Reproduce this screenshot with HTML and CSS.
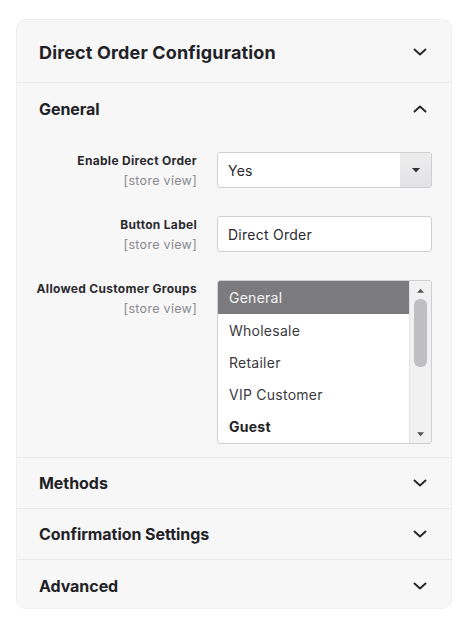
FILE: index.html
```html
<!DOCTYPE html>
<html>
<head>
<meta charset="utf-8">
<link rel="stylesheet" href="styles.css">
</head>
<body>
<div class="card">
  <div class="section top">
    <span class="title big">Direct Order Configuration</span>
    <svg class="chev" viewBox="0 0 14 8"><path d="M1.5 1.5 L7 6.5 L12.5 1.5"/></svg>
  </div>
  <div class="group">
    <div class="section open">
      <span class="title">General</span>
      <svg class="chev" viewBox="0 0 14 8"><path d="M1.5 6.5 L7 1.5 L12.5 6.5"/></svg>
    </div>
    <div class="fields">
      <div class="row">
        <div class="label"><div class="name">Enable Direct Order</div><div class="scope">[store view]</div></div>
        <div class="select">
          <span class="val">Yes</span>
          <span class="arrow"><svg viewBox="0 0 8 5"><path d="M0 0 H8 L4 4.5 Z"/></svg></span>
        </div>
      </div>
      <div class="row">
        <div class="label"><div class="name">Button Label</div><div class="scope">[store view]</div></div>
        <div class="input"><span class="val">Direct Order</span></div>
      </div>
      <div class="row">
        <div class="label"><div class="name">Allowed Customer Groups</div><div class="scope">[store view]</div></div>
        <div class="listbox">
          <div class="items">
            <div class="item sel">General</div>
            <div class="item">Wholesale</div>
            <div class="item">Retailer</div>
            <div class="item">VIP Customer</div>
            <div class="item strong">Guest</div>
          </div>
          <div class="scroll">
            <svg class="sarrow" viewBox="0 0 8 5"><path d="M0 5 H8 L4 0.5 Z"/></svg>
            <div class="thumb"></div>
            <div class="spacer"></div>
            <svg class="sarrow" viewBox="0 0 8 5"><path d="M0 0 H8 L4 4.5 Z"/></svg>
          </div>
        </div>
      </div>
    </div>
  </div>
  <div class="section">
    <span class="title">Methods</span>
    <svg class="chev" viewBox="0 0 14 8"><path d="M1.5 1.5 L7 6.5 L12.5 1.5"/></svg>
  </div>
  <div class="section">
    <span class="title">Confirmation Settings</span>
    <svg class="chev" viewBox="0 0 14 8"><path d="M1.5 1.5 L7 6.5 L12.5 1.5"/></svg>
  </div>
  <div class="section last">
    <span class="title">Advanced</span>
    <svg class="chev" viewBox="0 0 14 8"><path d="M1.5 1.5 L7 6.5 L12.5 1.5"/></svg>
  </div>
</div>
</body>
</html>
```
FILE: styles.css
```css
* { box-sizing: border-box; }
body {
  margin: 0;
  background: #ffffff;
  font-family: Inter, "Liberation Sans", sans-serif;
  color: #222226;
}
.card {
  margin: 19px 0 0 16px;
  width: 436px;
  height: 590px;
  background: #f7f7f8;
  border: 1px solid #efeff0;
  border-radius: 10px;
  overflow: hidden;
}
.section {
  height: 51px;
  display: flex;
  align-items: center;
  justify-content: space-between;
  padding: 0 24px 0 22px;
  border-bottom: 1px solid #ebebed;
}
.section.top { height: 63px; padding-top: 2px; }
.section.open { border-bottom: none; height: 52px; }
.section.last { border-bottom: none; }
.group { border-bottom: 1px solid #ebebed; }
.title {
  font-weight: 700;
  font-size: 16px;
  letter-spacing: -0.05px;
}
.title.big {
  font-size: 18px;
  letter-spacing: 0.15px;
}
.chev {
  width: 14px;
  height: 8px;
  fill: none;
  stroke: #26262a;
  stroke-width: 1.9;
  stroke-linecap: round;
  stroke-linejoin: round;
}
.fields {
  padding: 17px 0 13px 0;
  display: flex;
  flex-direction: column;
  gap: 28px;
}
.row {
  display: flex;
  align-items: flex-start;
}
.label {
  width: 180px;
  text-align: right;
  padding-top: 2px;
}
.name {
  font-weight: 700;
  font-size: 12px;
  line-height: 14px;
  letter-spacing: 0.3px;
  color: #2a2a2e;
}
.scope {
  font-size: 12.5px;
  line-height: 14px;
  letter-spacing: 0.3px;
  margin-top: 6px;
  color: #8a8a90;
}
.select, .input, .listbox {
  margin-left: 20px;
  width: 215px;
  background: #fff;
  border: 1px solid #cfcfd3;
  border-radius: 3px;
}
.select, .input {
  height: 36px;
  display: flex;
  align-items: center;
}
.val {
  flex: 1;
  padding-left: 10px;
  font-size: 14px;
  letter-spacing: 0.25px;
  color: #2a2a2e;
}
.arrow {
  width: 31px;
  align-self: stretch;
  background: linear-gradient(#ededee, #e2e2e4);
  display: flex;
  align-items: center;
  justify-content: center;
  border-radius: 0 2px 2px 0;
}
.arrow svg { width: 8px; height: 5px; fill: #333; }
.listbox {
  height: 164px;
  display: flex;
  overflow: hidden;
}
.items { flex: 1; }
.item {
  height: 32px;
  display: flex;
  align-items: center;
  padding-left: 11px;
  font-size: 14px;
  letter-spacing: 0.25px;
  color: #3a3a3e;
}
.item.sel {
  height: 33px;
  background: #7b7b7e;
  color: #f4f4f4;
}
.item.strong { font-weight: 700; color: #222; }
.scroll {
  width: 22px;
  background: #f1f1f2;
  border-left: 1px solid #e3e3e5;
  display: flex;
  flex-direction: column;
  align-items: center;
  padding: 7px 0 6px;
}
.sarrow { width: 7px; height: 5px; fill: #555; flex: none; }
.thumb {
  margin-top: 6px;
  width: 13px;
  height: 68px;
  background: #bfbfc2;
  border-radius: 6px;
}
.spacer { flex: 1; }
```
